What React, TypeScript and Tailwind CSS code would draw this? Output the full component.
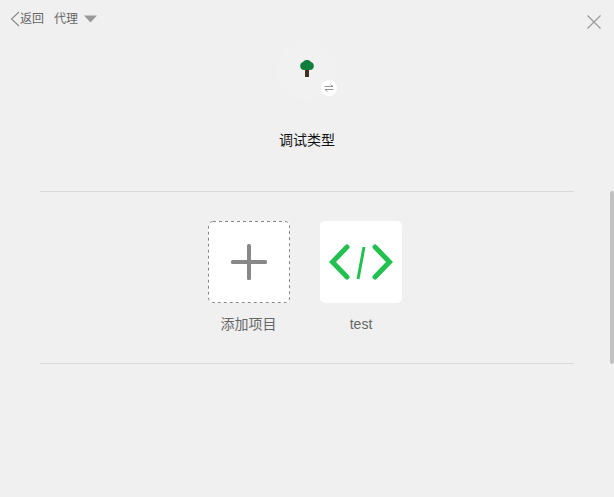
export default function App() {
  return (
    <div className="relative h-[497px] w-full overflow-hidden bg-[#f0f0f0] font-['Liberation_Sans','Noto_Sans_CJK_SC',sans-serif] text-[#666]">
      <div className="flex h-[38px] items-center pl-[10px] text-[12px] leading-none">
        <svg width="10" height="16" viewBox="0 0 10 16" fill="none" stroke="#888" strokeWidth="1.1">
          <path d="M9 1 L1.5 8 L9 15" />
        </svg>
        <span>返回</span>
        <span className="ml-[10px]">代理</span>
        <svg className="ml-[6px]" width="13" height="8" viewBox="0 0 13 8">
          <path d="M0 0.5 H13 L6.5 7.5 Z" fill="#999" />
        </svg>
      </div>

      <div className="mt-[2px] flex flex-col items-center">
        <div className="relative flex h-[60px] w-[60px] justify-center rounded-full bg-[#f1f1f1] pt-[20px]">
          <svg width="14" height="17" viewBox="0 0 14 17">
            <rect x="5" y="9" width="4" height="8" fill="#3f3222" />
            <path d="M0.2 6 C0.2 3.5 1.5 2.5 3 2 C4 0.6 5.5 0 7 0 C8.5 0 10 0.6 11 2 C12.5 2.5 13.8 3.5 13.8 6 C13.8 8.5 12 10 10 10 H4 C2 10 0.2 8.5 0.2 6 Z" fill="#0f7d3c" />
          </svg>
          <div className="absolute left-[44px] top-[40px] flex h-4 w-4 items-center justify-center rounded-full bg-white">
            <svg width="10" height="8" viewBox="0 0 10 8" fill="none" stroke="#888" strokeWidth="0.9">
              <path d="M0.5 2.5 H9 M6.5 0.5 L9 2.5 M9.5 5.5 H1 M3.5 7.5 L1 5.5" />
            </svg>
          </div>
        </div>
        <div className="mt-[30px] text-[14px] leading-[20px] text-[#111]">调试类型</div>
      </div>

      <div className="mx-10 mt-[41px] border-y border-[#d9d9d9] pb-[29px] pt-[29px]">
        <div className="flex justify-center gap-[30px] pr-[5px]">
          <div className="flex w-[82px] flex-col items-center">
            <div className="relative flex h-[82px] w-[82px] items-center justify-center rounded-[5px] bg-white">
              <svg className="absolute inset-0" width="82" height="82" viewBox="0 0 82 82" fill="none">
                <rect x="0.5" y="0.5" width="81" height="81" rx="4.5" stroke="#888" strokeWidth="1" strokeDasharray="3 3" />
              </svg>
              <svg width="38" height="38" viewBox="0 0 38 38" fill="#888">
                <rect x="17" y="1" width="4" height="36" rx="1.5" />
                <rect x="1" y="17" width="36" height="4" rx="1.5" />
              </svg>
            </div>
            <div className="mt-[11px] whitespace-nowrap text-[14px] leading-[20px]">添加项目</div>
          </div>
          <div className="flex w-[82px] flex-col items-center">
            <div className="flex h-[82px] w-[82px] items-center justify-center rounded-[5px] bg-white">
              <svg width="66" height="38" viewBox="0 0 66 38" fill="none" stroke="#22c04f" strokeLinecap="round">
                <path d="M19 4 L4.5 19 L19 34" strokeWidth="5" />
                <path d="M47 4 L61.5 19 L47 34" strokeWidth="5" />
                <path d="M36 4 L30 36" strokeWidth="3" strokeLinecap="butt" />
              </svg>
            </div>
            <div className="mt-[11px] pl-[1px] text-[14px] leading-[20px]">test</div>
          </div>
        </div>
      </div>

      <svg className="absolute left-[587px] top-[15px]" width="14" height="14" viewBox="0 0 14 14" fill="none" stroke="#999" strokeWidth="1.2">
        <path d="M0.5 0.5 L13.5 13.5 M13.5 0.5 L0.5 13.5" />
      </svg>
      <div className="absolute right-0 top-[191px] h-[173px] w-[4px] rounded-[2px] bg-[#c1c1c1]" />
    </div>
  );
}
